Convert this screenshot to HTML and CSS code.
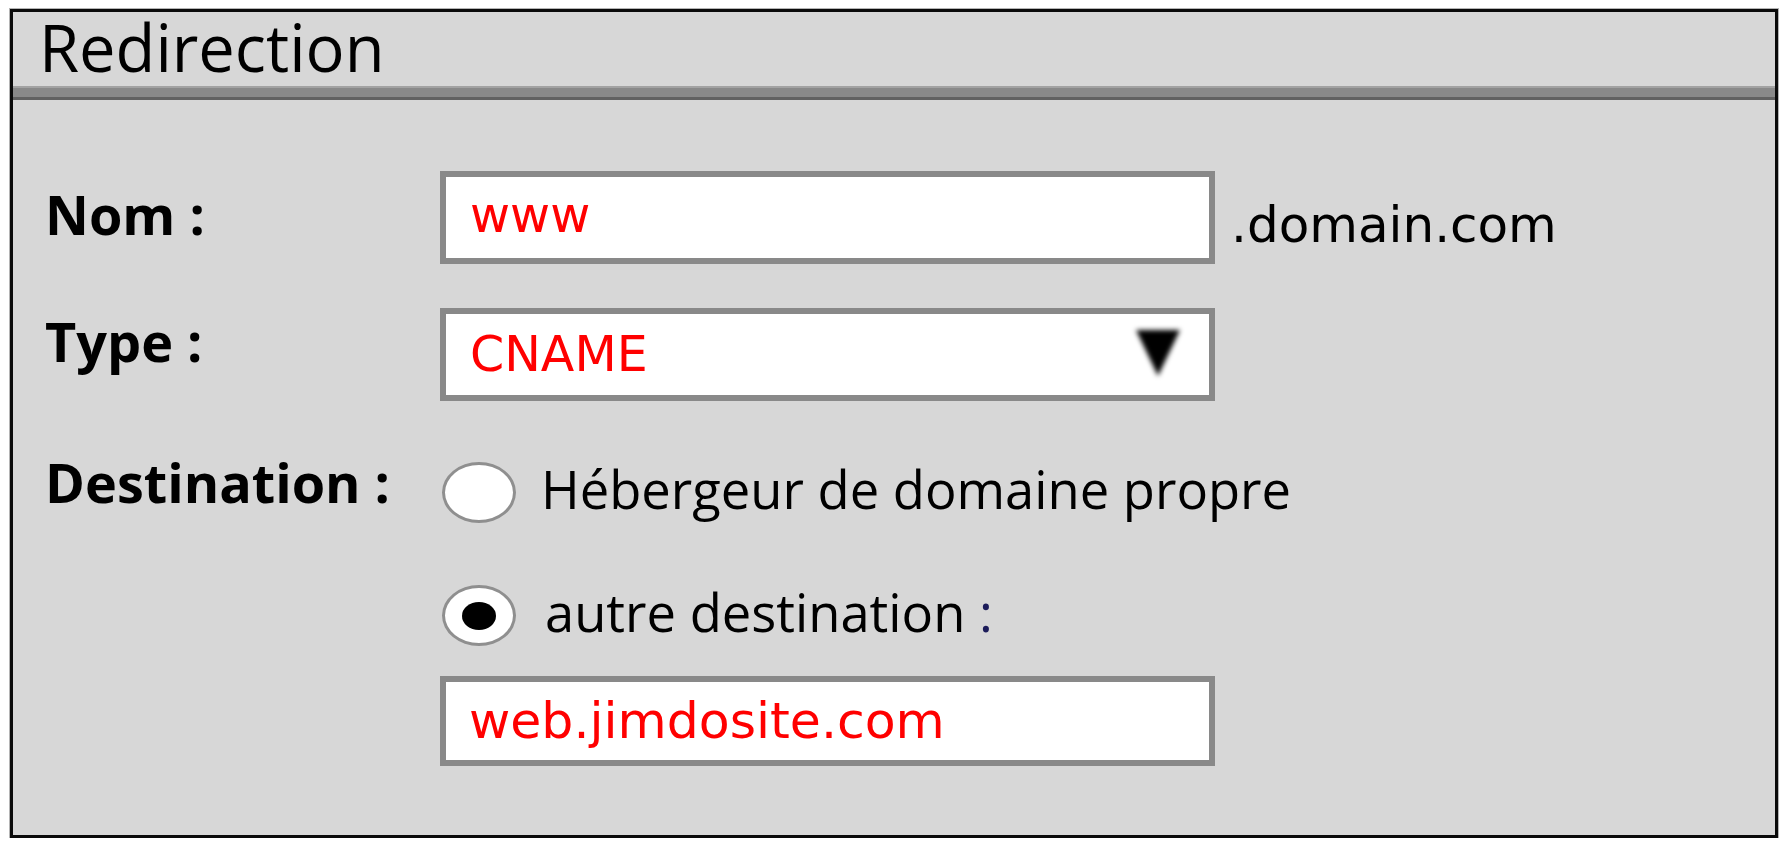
FILE: index.html
```html
<!DOCTYPE html>
<html lang="fr">
<head>
<meta charset="utf-8">
<title>Redirection</title>
<link rel="stylesheet" href="styles.css">
</head>
<body>
<div class="frame">
  <div class="header"><h1 class="title">Redirection</h1></div>
  <div class="bar"></div>
  <div class="form">
    <div class="row row-name">
      <div class="label label-name">Nom :</div>
      <div class="textbox textbox-name"><span class="value">www</span></div>
      <span class="suffix">.domain.com</span>
    </div>
    <div class="row row-type">
      <div class="label label-type">Type :</div>
      <div class="select">
        <span class="value">CNAME</span>
        <svg class="arrow" width="64" height="64" viewBox="0 0 64 64">
          <defs><filter id="soft" x="-30%" y="-30%" width="160%" height="160%"><feGaussianBlur stdDeviation="2.8"/></filter></defs>
          <polygon points="10,10 54,10 32,56" fill="#000" filter="url(#soft)"/>
        </svg>
      </div>
    </div>
    <div class="row row-dest">
      <div class="label label-dest">Destination :</div>
      <div class="options">
        <div class="option option-1">
          <span class="radio"></span>
          <span class="option-text">Hébergeur de domaine propre</span>
        </div>
        <div class="option option-2">
          <span class="radio radio-checked"><span class="dot"></span></span>
          <span class="option-text">autre destination <span class="colon">:</span></span>
        </div>
        <div class="textbox textbox-dest"><span class="value value-dest">web.jimdosite.com</span></div>
      </div>
    </div>
  </div>
</div>
</body>
</html>
```

FILE: styles.css
```css
html, body {
  margin: 0;
  padding: 0;
  background: #ffffff;
}

.frame {
  margin: 9px 0 0 10px;
  width: 1768px;
  height: 829px;
  box-sizing: border-box;
  border: 3px solid #0a0a0a;
  box-shadow: 0 0 0 1px #b4b4b4;
  background: #d7d7d7;
  display: flex;
  flex-direction: column;
}

.header {
  height: 74px;
  flex: none;
}

.title {
  margin: 0;
  padding-left: 26px;
  font-family: "Open Sans", "Liberation Sans", sans-serif;
  font-weight: 400;
  font-size: 65px;
  line-height: 70px;
  color: #000;
}

.bar {
  height: 14px;
  flex: none;
  box-sizing: border-box;
  background: #898989;
  border-top: 2px solid #a2a2a2;
  border-bottom: 3px solid #616161;
}

.form {
  display: flex;
  flex-direction: column;
  padding: 71px 0 0 32px;
}

.row {
  display: flex;
  align-items: flex-start;
}

.label {
  width: 395px;
  flex: none;
  font-family: "Open Sans", "Liberation Sans", sans-serif;
  font-weight: 700;
  font-size: 54px;
  line-height: 54px;
  color: #000;
}

.label-name { margin-top: 16px; }
.row-type { margin-top: 44px; }
.label-type { margin-top: 6px; }
.row-dest { margin-top: 55px; }
.label-dest { margin-top: -1px; }

.textbox,
.select {
  width: 775px;
  height: 93px;
  box-sizing: border-box;
  border: 6px solid #898989;
  background: #ffffff;
  display: flex;
  align-items: center;
  padding-left: 24px;
  flex: none;
}

.textbox-name { padding-bottom: 5px; }

.value {
  font-family: "DejaVu Sans", Verdana, sans-serif;
  font-size: 49px;
  line-height: 1;
  color: #ff0000;
}

.value-dest {
  font-size: 50.5px;
}

.suffix {
  margin: 29px 0 0 16px;
  font-family: "DejaVu Sans", Verdana, sans-serif;
  font-size: 50px;
  line-height: 1;
  color: #000;
}

.select {
  justify-content: space-between;
  padding-right: 19px;
}

.arrow {
  display: block;
  margin-bottom: 6px;
}

.options {
  display: flex;
  flex-direction: column;
  margin-top: 6px;
}

.option {
  display: flex;
  align-items: flex-start;
}

.option-2 { margin-top: 62px; }

.radio {
  width: 74px;
  height: 61px;
  box-sizing: border-box;
  margin-left: 2px;
  border: 3px solid #8f8f8f;
  border-radius: 50%;
  background: #ffffff;
  flex: none;
  display: flex;
  align-items: center;
  justify-content: center;
}

.dot {
  width: 34px;
  height: 28px;
  border-radius: 50%;
  background: #000;
}

.option-text {
  font-family: "Open Sans", "Liberation Sans", sans-serif;
  font-weight: 400;
  font-size: 52.5px;
  line-height: 54px;
  color: #000;
}

.option-1 .option-text { margin-left: 25px; }
.option-2 .option-text { margin-left: 29px; }

.colon { color: #1c1c5a; }

.textbox-dest {
  margin-top: 30px;
  height: 90px;
  padding-left: 23px;
}
```
